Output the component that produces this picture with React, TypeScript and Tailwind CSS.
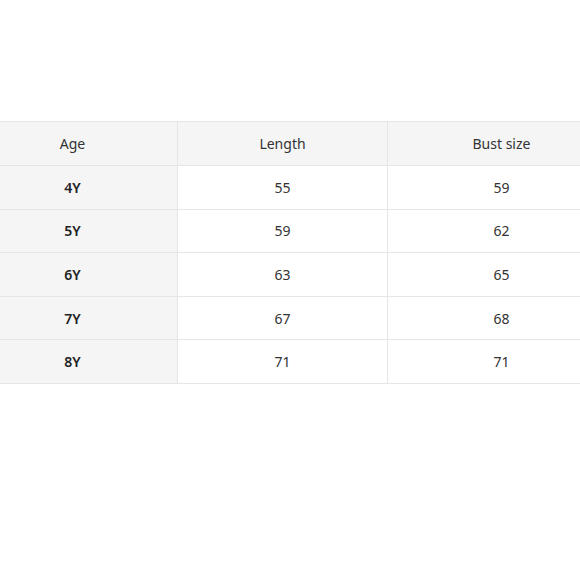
import React from "react";

const rows = [
  ["4Y", "55", "59"],
  ["5Y", "59", "62"],
  ["6Y", "63", "65"],
  ["7Y", "67", "68"],
  ["8Y", "71", "71"],
];

export default function App() {
  return (
    <div className="w-[580px] h-[580px] bg-white overflow-hidden" style={{ fontFamily: '"Noto Sans", "Open Sans", sans-serif' }}>
      <div className="pt-[121px] ml-[-33px] w-[660px]">
        <table className="table-fixed w-[648px] border-collapse text-[14px] text-[#333]">
          <colgroup>
            <col className="w-[210px]" />
            <col className="w-[210px]" />
            <col className="w-[228px]" />
          </colgroup>
          <thead>
            <tr className="bg-[#f5f5f5]">
              <th className="h-[44px] border border-[#e6e6e6] font-normal">Age</th>
              <th className="h-[44px] border border-[#e6e6e6] font-normal">Length</th>
              <th className="h-[44px] border border-[#e6e6e6] font-normal">Bust size</th>
            </tr>
          </thead>
          <tbody>
            {rows.map((r) => (
              <tr key={r[0]}>
                <td className="h-[43.6px] border border-[#e6e6e6] bg-[#f5f5f5] text-center font-semibold text-[#222]">{r[0]}</td>
                <td className="h-[43.6px] border border-[#e6e6e6] text-center">{r[1]}</td>
                <td className="h-[43.6px] border border-[#e6e6e6] text-center">{r[2]}</td>
              </tr>
            ))}
          </tbody>
        </table>
      </div>
    </div>
  );
}
